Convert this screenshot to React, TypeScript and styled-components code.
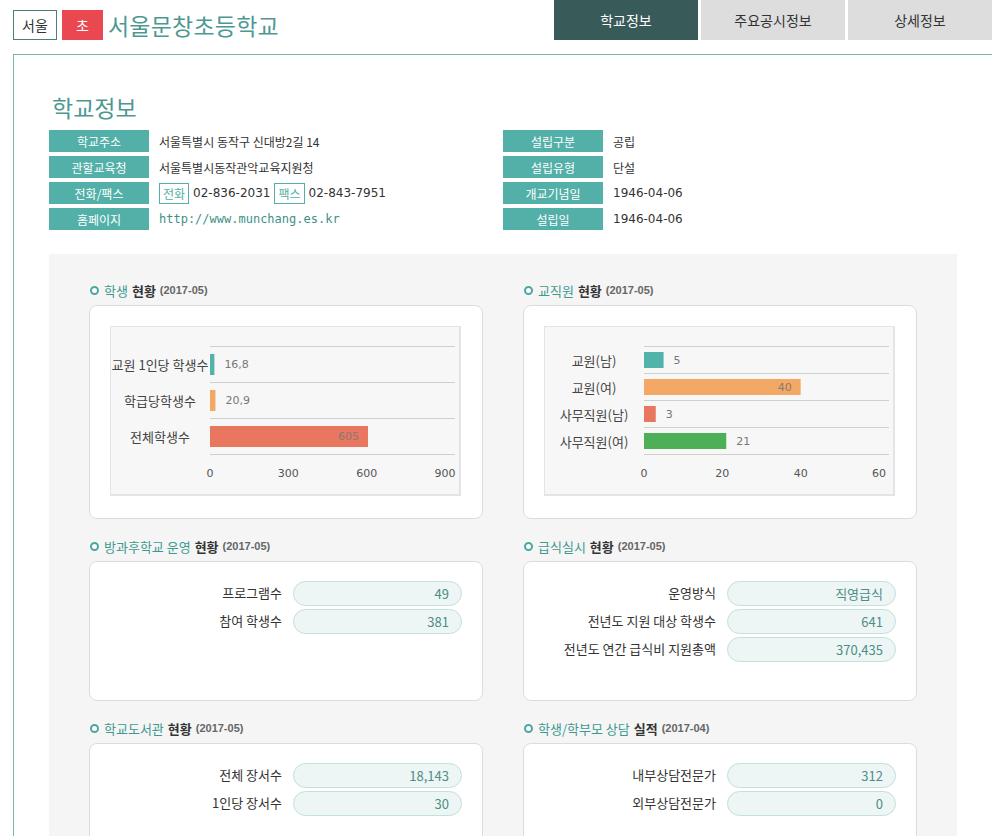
import styled, { createGlobalStyle } from "styled-components";

const GlobalStyle = createGlobalStyle`
    html, body {
        margin: 0;
        padding: 0;
        overflow: hidden;
        background: #fff;
        font-family: "Noto Sans CJK KR", "Noto Sans", sans-serif;
        color: #333;
    }
`

const KR = `"Noto Sans CJK KR", "Noto Sans", sans-serif`;

// ---------- header ----------

const Header = styled.div`
    display: flex;
    justify-content: space-between;
    align-items: flex-start;
    height: 40px;
    margin-bottom: 14px;
`
const Brand = styled.div`
    display: flex;
    align-items: center;
    margin: 10px 0 0 13px;
`
const Region = styled.div`
    width: 44px;
    height: 30px;
    box-sizing: border-box;
    border: 1px solid #4f7f72;
    display: flex;
    align-items: center;
    justify-content: center;
    font-size: 14px;
    color: #333;
`
const Level = styled.div`
    width: 41px;
    height: 30px;
    margin-left: 5px;
    background: #ea4850;
    color: #fff;
    display: flex;
    align-items: center;
    justify-content: center;
    font-size: 14px;
`
const SchoolName = styled.h1`
    margin: 0 0 0 5px;
    font-size: 23px;
    font-weight: 400;
    color: #4d9891;
    line-height: 30px;
    letter-spacing: 0.2px;
`
const Tabs = styled.div`
    display: flex;
    gap: 3px;
`
const Tab = styled.div<{ $active?: boolean }>`
    width: 144px;
    height: 40px;
    display: flex;
    align-items: center;
    justify-content: center;
    font-size: 14px;
    background: ${p => p.$active ? "#385a59" : "#dddddd"};
    color: ${p => p.$active ? "#fff" : "#333"};
`

// ---------- school info ----------

const Container = styled.div`
    margin-left: 13px;
    width: 980px;
    box-sizing: border-box;
    border: 1px solid #7ab5b0;
    border-bottom: none;
    padding: 37px 35px 0 35px;
    min-height: 800px;
`
const Heading = styled.h2`
    margin: 0 0 8px 3px;
    font-size: 23px;
    font-weight: 400;
    line-height: 30px;
    color: #4d9891;
`
const InfoGrid = styled.div`
    display: grid;
    grid-template-columns: 454px 1fr;
`
const InfoList = styled.div`
    display: flex;
    flex-direction: column;
    gap: 4px;
`
const InfoRow = styled.div`
    display: flex;
    align-items: center;
    height: 22px;
`
const InfoLabel = styled.div`
    width: 100px;
    height: 22px;
    background: #52b0a8;
    color: #fff;
    font-size: 12px;
    display: flex;
    align-items: center;
    justify-content: center;
`
const InfoValue = styled.div<{ $link?: boolean }>`
    margin-left: 10px;
    font-size: 12px;
    color: ${p => p.$link ? "#3f8f88" : "#333"};
    font-family: ${p => p.$link ? `"DejaVu Sans Mono", monospace` : KR};
    display: flex;
    align-items: center;
    gap: 4px;
`
const Digits = styled.span`
    font-family: "DejaVu Sans", sans-serif;
    font-size: 12px;
`
const Tag = styled.span`
    border: 1px solid #52b0a8;
    color: #52b0a8;
    height: 19px;
    padding: 0 3px;
    display: inline-flex;
    align-items: center;
    font-size: 12px;
`

// ---------- statistics ----------

const StatsArea = styled.div`
    margin-top: 24px;
    background: #f5f5f5;
    padding: 26px 40px 40px 40px;
    display: grid;
    grid-template-columns: 394px 394px;
    column-gap: 40px;
    row-gap: 17px;
`
const Section = styled.div`
    display: flex;
    flex-direction: column;
`
const SectionTitle = styled.div`
    display: flex;
    align-items: center;
    height: 20px;
    margin-bottom: 5px;
    padding-left: 1px;
    font-size: 13px;
`
const Dot = styled.span`
    width: 9px;
    height: 9px;
    box-sizing: border-box;
    border: 2.5px solid #4aa8a0;
    border-radius: 50%;
    background: #fff;
    margin-right: 5px;
`
const TitleMain = styled.span`
    color: #3d9990;
`
const TitleSub = styled.span`
    color: #333;
    font-weight: 700;
    margin-left: 4px;
`
const TitleDate = styled.span`
    color: #666;
    font-size: 11px;
    font-weight: 700;
    margin-left: 4px;
    font-family: "Liberation Sans", sans-serif;
`
const Card = styled.div`
    flex: 1;
    background: #fff;
    border: 1px solid #dcdcdc;
    border-radius: 8px;
    box-sizing: border-box;
`
const ChartCard = styled(Card)`
    padding: 20px 21px 22px 20px;
`
const ChartBox = styled.div`
    width: 351px;
    height: 170px;
    box-sizing: border-box;
    background: #f7f7f7;
    border: 1px solid #e4e4e4;
    border-right-width: 2px;
    border-bottom-width: 2px;
`
const StatCard = styled(Card)`
    min-height: 140px;
    padding: 19px 20px 20px 0;
    display: flex;
    flex-direction: column;
    gap: 3px;
`
const StatRow = styled.div`
    display: flex;
    align-items: center;
    justify-content: flex-end;
`
const StatLabel = styled.div`
    font-size: 13px;
    color: #333;
    margin-right: 11px;
    padding-bottom: 3px;
`
const StatPill = styled.div`
    width: 169px;
    height: 25px;
    box-sizing: border-box;
    border: 1px solid #c3e0dc;
    border-radius: 13px;
    background: #eef6f5;
    color: #4b8d87;
    font-size: 13px;
    display: flex;
    align-items: center;
    justify-content: flex-end;
    padding-right: 12px;
`

interface Bar {
    label: string;
    value: number;
    text: string;
    color: string;
}

interface ChartProps {
    bars: Bar[];
    max: number;
    ticks: number[];
    rowPitch: number;
    barHeight: number;
    firstLine: number;
}

function BarChart(props: ChartProps) {
    const x0 = 99;
    const span = 235;
    const scale = (v: number) => (v / props.max) * span;
    const lines = props.bars.map((_, i) => props.firstLine + i * props.rowPitch);
    lines.push(props.firstLine + props.bars.length * props.rowPitch);
    const axisY = 146;
    return (
        <ChartBox>
            <svg width="348" height="167" style={{ display: "block" }} fontFamily={KR} fontSize="13">
                {lines.map(y => (
                    <line key={y} x1={x0} x2={344} y1={y + 0.5} y2={y + 0.5} stroke="#cfcfcf" />
                ))}
                {props.bars.map((b, i) => {
                    const top = props.firstLine + i * props.rowPitch + (props.rowPitch - props.barHeight) / 2 + 0.5;
                    const w = scale(b.value);
                    const cy = top + props.barHeight / 2;
                    const inside = w > 120;
                    return (
                        <g key={b.label}>
                            <text x={49} y={cy} textAnchor="middle" dominantBaseline="central" fill="#444">{b.label}</text>
                            <rect x={x0} y={top} width={w} height={props.barHeight} fill={b.color} />
                            <text
                                x={inside ? x0 + w - 9 : x0 + w + 10}
                                y={cy}
                                textAnchor={inside ? "end" : "start"}
                                dominantBaseline="central"
                                fill={inside ? "#8a7a74" : "#777"}
                                fontFamily="DejaVu Sans, sans-serif"
                                fontSize="11"
                            >{b.text}</text>
                        </g>
                    );
                })}
                {props.ticks.map(t => (
                    <text key={t} x={x0 + scale(t)} y={axisY} textAnchor="middle" dominantBaseline="central" fill="#555" fontFamily="DejaVu Sans, sans-serif" fontSize="11">{t}</text>
                ))}
            </svg>
        </ChartBox>
    );
}

interface TitleProps {
    main: string;
    sub: string;
    date: string;
}

function Title(props: TitleProps) {
    return (
        <SectionTitle>
            <Dot />
            <TitleMain>{props.main}</TitleMain>
            <TitleSub>{props.sub}</TitleSub>
            <TitleDate>{props.date}</TitleDate>
        </SectionTitle>
    );
}

interface Stat {
    label: string;
    value: string;
}

function StatList(props: { items: Stat[] }) {
    return (
        <StatCard>
            {props.items.map(s => (
                <StatRow key={s.label}>
                    <StatLabel>{s.label}</StatLabel>
                    <StatPill>{s.value}</StatPill>
                </StatRow>
            ))}
        </StatCard>
    );
}

const leftInfo = [
    { label: "학교주소", value: "서울특별시 동작구 신대방2길 14" },
    { label: "관할교육청", value: "서울특별시동작관악교육지원청" },
];

const rightInfo = [
    { label: "설립구분", value: "공립" },
    { label: "설립유형", value: "단설" },
    { label: "개교기념일", value: "1946-04-06", digits: true },
    { label: "설립일", value: "1946-04-06", digits: true },
];

export default function App() {
    return (
        <>
            <GlobalStyle />
            <Header>
                <Brand>
                    <Region>서울</Region>
                    <Level>초</Level>
                    <SchoolName>서울문창초등학교</SchoolName>
                </Brand>
                <Tabs>
                    <Tab $active>학교정보</Tab>
                    <Tab>주요공시정보</Tab>
                    <Tab>상세정보</Tab>
                </Tabs>
            </Header>
            <Container>
                <Heading>학교정보</Heading>
                <InfoGrid>
                    <InfoList>
                        {leftInfo.map(r => (
                            <InfoRow key={r.label}>
                                <InfoLabel>{r.label}</InfoLabel>
                                <InfoValue>{r.value}</InfoValue>
                            </InfoRow>
                        ))}
                        <InfoRow>
                            <InfoLabel>전화/팩스</InfoLabel>
                            <InfoValue>
                                <Tag>전화</Tag><Digits>02-836-2031</Digits><Tag>팩스</Tag><Digits>02-843-7951</Digits>
                            </InfoValue>
                        </InfoRow>
                        <InfoRow>
                            <InfoLabel>홈페이지</InfoLabel>
                            <InfoValue $link>http://www.munchang.es.kr</InfoValue>
                        </InfoRow>
                    </InfoList>
                    <InfoList>
                        {rightInfo.map(r => (
                            <InfoRow key={r.label}>
                                <InfoLabel>{r.label}</InfoLabel>
                                <InfoValue>{r.digits ? <Digits>{r.value}</Digits> : r.value}</InfoValue>
                            </InfoRow>
                        ))}
                    </InfoList>
                </InfoGrid>

                <StatsArea>
                    <Section>
                        <Title main="학생" sub="현황" date="(2017-05)" />
                        <ChartCard>
                            <BarChart
                                max={900}
                                ticks={[0, 300, 600, 900]}
                                rowPitch={36}
                                barHeight={21}
                                firstLine={19}
                                bars={[
                                    { label: "교원 1인당 학생수", value: 16.8, text: "16,8", color: "#52b3aa" },
                                    { label: "학급당학생수", value: 20.9, text: "20,9", color: "#f4a866" },
                                    { label: "전체학생수", value: 605, text: "605", color: "#e9765f" },
                                ]}
                            />
                        </ChartCard>
                    </Section>
                    <Section>
                        <Title main="교직원" sub="현황" date="(2017-05)" />
                        <ChartCard>
                            <BarChart
                                max={60}
                                ticks={[0, 20, 40, 60]}
                                rowPitch={27}
                                barHeight={16}
                                firstLine={19}
                                bars={[
                                    { label: "교원(남)", value: 5, text: "5", color: "#52b3aa" },
                                    { label: "교원(여)", value: 40, text: "40", color: "#f4a866" },
                                    { label: "사무직원(남)", value: 3, text: "3", color: "#e9765f" },
                                    { label: "사무직원(여)", value: 21, text: "21", color: "#4daf57" },
                                ]}
                            />
                        </ChartCard>
                    </Section>
                    <Section>
                        <Title main="방과후학교 운영" sub="현황" date="(2017-05)" />
                        <StatList items={[
                            { label: "프로그램수", value: "49" },
                            { label: "참여 학생수", value: "381" },
                        ]} />
                    </Section>
                    <Section>
                        <Title main="급식실시" sub="현황" date="(2017-05)" />
                        <StatList items={[
                            { label: "운영방식", value: "직영급식" },
                            { label: "전년도 지원 대상 학생수", value: "641" },
                            { label: "전년도 연간 급식비 지원총액", value: "370,435" },
                        ]} />
                    </Section>
                    <Section>
                        <Title main="학교도서관" sub="현황" date="(2017-05)" />
                        <StatList items={[
                            { label: "전체 장서수", value: "18,143" },
                            { label: "1인당 장서수", value: "30" },
                        ]} />
                    </Section>
                    <Section>
                        <Title main="학생/학부모 상담" sub="실적" date="(2017-04)" />
                        <StatList items={[
                            { label: "내부상담전문가", value: "312" },
                            { label: "외부상담전문가", value: "0" },
                        ]} />
                    </Section>
                </StatsArea>
            </Container>
        </>
    );
}
